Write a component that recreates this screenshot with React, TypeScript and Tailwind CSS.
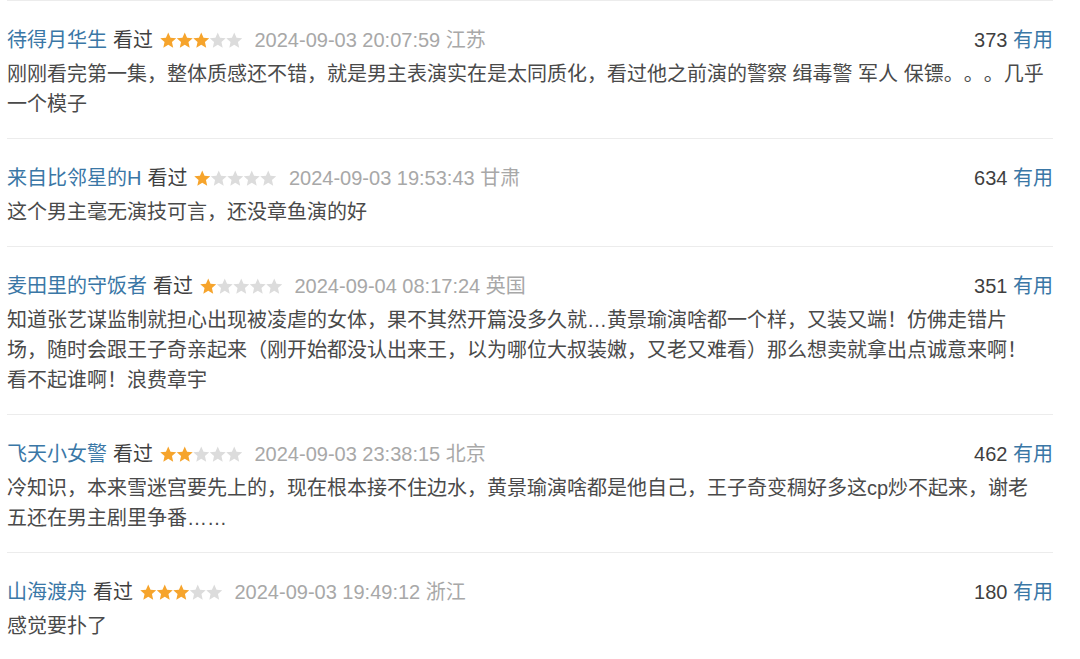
import React from "react";

type Comment = {
  id: number;
  user: string;
  rating: number;
  time: string;
  place: string;
  votes: number;
  lines: string[];
};

const comments: Comment[] = [
  {
    id: 1,
    user: "待得月华生",
    rating: 3,
    time: "2024-09-03 20:07:59",
    place: "江苏",
    votes: 373,
    lines: [
      "刚刚看完第一集，整体质感还不错，就是男主表演实在是太同质化，看过他之前演的警察 缉毒警 军人 保镖。。。几乎",
      "一个模子",
    ],
  },
  {
    id: 2,
    user: "来自比邻星的H",
    rating: 1,
    time: "2024-09-03 19:53:43",
    place: "甘肃",
    votes: 634,
    lines: ["这个男主毫无演技可言，还没章鱼演的好"],
  },
  {
    id: 3,
    user: "麦田里的守饭者",
    rating: 1,
    time: "2024-09-04 08:17:24",
    place: "英国",
    votes: 351,
    lines: [
      "知道张艺谋监制就担心出现被凌虐的女体，果不其然开篇没多久就…黄景瑜演啥都一个样，又装又端！仿佛走错片",
      "场，随时会跟王子奇亲起来（刚开始都没认出来王，以为哪位大叔装嫩，又老又难看）那么想卖就拿出点诚意来啊！",
      "看不起谁啊！浪费章宇",
    ],
  },
  {
    id: 4,
    user: "飞天小女警",
    rating: 2,
    time: "2024-09-03 23:38:15",
    place: "北京",
    votes: 462,
    lines: [
      "冷知识，本来雪迷宫要先上的，现在根本接不住边水，黄景瑜演啥都是他自己，王子奇变稠好多这cp炒不起来，谢老",
      "五还在男主剧里争番……",
    ],
  },
  {
    id: 5,
    user: "山海渡舟",
    rating: 3,
    time: "2024-09-03 19:49:12",
    place: "浙江",
    votes: 180,
    lines: ["感觉要扑了"],
  },
];

// one star in an 11x11 box, repeated five times
const STAR =
  "5.5,0.3 7.03,3.8 10.83,4.17 7.97,6.7 8.79,10.43 5.5,8.5 2.21,10.43 3.03,6.7 0.17,4.17 3.97,3.8";

const Stars: React.FC<{ value: number }> = ({ value }) => (
  <svg width="82.5" height="16.5" viewBox="0 0 55 11" className="shrink-0">
    {[0, 1, 2, 3, 4].map((i) => (
      <polygon
        key={i}
        points={STAR}
        transform={`translate(${i * 11} 0)`}
        fill={i < value ? "#f6a42c" : "#dcdcdc"}
      />
    ))}
  </svg>
);

const App: React.FC = () => {
  return (
    <div className="min-h-screen bg-white font-['Liberation_Sans','Noto_Sans_CJK_SC',sans-serif] text-[20px] leading-[30px] text-[#4a4a4a] [text-spacing-trim:space-all]">
      <div className="ml-[7px] w-[1046px]">
        {comments.map((c) => (
          <div key={c.id} className="border-t border-[#ececec] pt-6 pb-[19px]">
            {/* Header */}
            <div className="flex items-center justify-between whitespace-nowrap">
              <div className="flex items-center">
                <span className="text-[#3a77a6]">{c.user}</span>
                <span className="ml-[6px] text-[#3f3f3f]">看过</span>
                <span className="ml-[7px]">
                  <Stars value={c.rating} />
                </span>
                <span className="ml-3 text-[#a8a8a8]">
                  {c.time} {c.place}
                </span>
              </div>
              <div>
                <span className="text-[#3f3f3f]">{c.votes}</span>{" "}
                <span className="text-[#3a77a6]">有用</span>
              </div>
            </div>

            {/* Body */}
            <div className="mt-1">
              {c.lines.map((line, i) => (
                <p key={i} className="whitespace-nowrap">
                  {line}
                </p>
              ))}
            </div>
          </div>
        ))}
      </div>
    </div>
  );
};

export default App;
